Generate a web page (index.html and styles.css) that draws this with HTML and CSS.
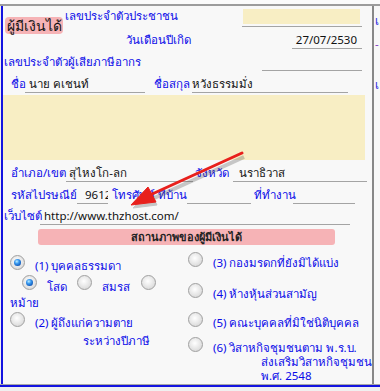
FILE: index.html
```html
<!DOCTYPE html>
<html lang="th">

<head>
    <meta charset="UTF-8">
    <title>ผู้มีเงินได้</title>
    <link rel="stylesheet" href="styles.css">
</head>

<body>
    <div class="screen">
        <div class="top-gap"></div>
        <div class="frame">
            <!-- Main form panel -->
            <div class="panel">
                <div class="head">
                    <div class="badge-col">
                        <div class="badge">ผู้มีเงินได้</div>
                    </div>
                    <div class="head-rows">
                        <div class="row r1">
                            <span class="lbl">เลขประจำตัวประชาชน</span>
                            <span class="field f-id"><span class="fill"></span></span>
                        </div>
                        <div class="row r2">
                            <span class="lbl l-birth">วันเดือนปีเกิด</span>
                            <span class="field f-date">27/07/2530</span>
                        </div>
                    </div>
                </div>

                <div class="row r3">
                    <span class="lbl l-tax">เลขประจำตัวผู้เสียภาษีอากร</span>
                    <span class="field f-tax"></span>
                </div>

                <div class="row r4">
                    <span class="lbl l-name">ชื่อ</span>
                    <span class="field f-name">นาย คเชนท์</span>
                    <span class="lbl l-surname">ชื่อสกุล</span>
                    <span class="field f-surname">หวังธรรมมั่ง</span>
                </div>

                <div class="address-box"></div>

                <div class="row r5">
                    <span class="lbl l-district">อำเภอ/เขต</span>
                    <span class="field f-district">สุไหงโก-ลก</span>
                    <span class="lbl l-province">จังหวัด</span>
                    <span class="field f-province">นราธิวาส</span>
                </div>

                <div class="row r6">
                    <span class="lbl l-zip">รหัสไปรษณีย์</span>
                    <span class="field f-zip">96121</span>
                    <span class="lbl l-phone">โทรศัพท์ ที่บ้าน</span>
                    <span class="field f-phone"></span>
                    <span class="lbl l-work">ที่ทำงาน</span>
                    <span class="field f-work"></span>
                </div>

                <div class="row r7">
                    <span class="lbl l-web">เว็บไซต์</span>
                    <span class="field f-web">http://www.thzhost.com/</span>
                </div>

                <div class="status-bar">สถานภาพของผู้มีเงินได้</div>

                <!-- Status options -->
                <div class="status">
                    <div class="col col-left">
                        <div class="opt opt1">
                            <span class="radio on"></span>
                            <span class="opt-text">(1) บุคคลธรรมดา</span>
                        </div>
                        <div class="marital">
                            <span class="radio on m-first"></span>
                            <span class="m-text m-single">โสด</span>
                            <span class="radio"></span>
                            <span class="m-text m-married">สมรส</span>
                            <span class="radio"></span>
                            <span class="m-text m-widow">หม้าย</span>
                        </div>
                        <div class="opt opt2">
                            <span class="radio"></span>
                            <span class="opt-text">(2) ผู้ถึงแก่ความตาย<br><span class="indent-2">ระหว่างปีภาษี</span></span>
                        </div>
                    </div>
                    <div class="col col-right">
                        <div class="opt opt3">
                            <span class="radio"></span>
                            <span class="opt-text">(3) กองมรดกที่ยังมิได้แบ่ง</span>
                        </div>
                        <div class="opt opt4">
                            <span class="radio"></span>
                            <span class="opt-text">(4) ห้างหุ้นส่วนสามัญ</span>
                        </div>
                        <div class="opt opt5">
                            <span class="radio"></span>
                            <span class="opt-text">(5) คณะบุคคลที่มิใช่นิติบุคคล</span>
                        </div>
                        <div class="opt opt6">
                            <span class="radio"></span>
                            <span class="opt-text t6">(6) วิสาหกิจชุมชนตาม พ.ร.บ.<br><span class="indent-6">ส่งเสริมวิสาหกิจชุมชน</span><br><span class="indent-6">พ.ศ. 2548</span></span>
                        </div>
                    </div>
                </div>
            </div>
            <div class="divider"></div>
            <!-- Neighbouring panel, mostly cut off -->
            <div class="side">
                <span class="side-a">เ</span>
                <span class="side-b">-</span>
                <span class="side-c">เ</span>
            </div>
        </div>
        <div class="blue-line"></div>

        <!-- Red annotation arrow -->
        <svg class="arrow" width="380" height="391" viewBox="0 0 380 391">
            <g opacity="0.3" fill="#555" stroke="#555">
                <line x1="244" y1="157" x2="152" y2="199" stroke-width="4" />
                <polygon points="133,208 150,191 157,205" stroke-width="1" />
            </g>
            <g fill="#e8201c" stroke="#e8201c">
                <line x1="242" y1="153" x2="150" y2="195" stroke-width="3" stroke-linecap="round" />
                <polygon points="131,205 148,187 156,202" stroke-width="1" stroke-linejoin="round" />
            </g>
        </svg>
    </div>
</body>

</html>
```

FILE: styles.css
```css
body {
    margin: 0;
    background: #f0f0f0;
    font-family: Tahoma, "Noto Sans", "DejaVu Sans", sans-serif;
    font-size: 11.5px;
}

.screen {
    position: relative;
    width: 380px;
    height: 391px;
    overflow: hidden;
}

.top-gap {
    height: 4px;
    background: #fbfbfb;
}

.frame {
    display: flex;
    height: 378px;
    border-top: 2px solid #9c9c9c;
    border-bottom: 1px solid #a8a8a8;
}

.panel {
    width: 369px;
    margin-left: 1px;
    border-left: 2px solid #1414e0;
    background: #f8f8f8;
}

.divider {
    width: 2px;
    background: #888;
}

.side {
    flex: 1;
    background: #f8f8f8;
    overflow: hidden;
    color: #2020e0;
}

.side span {
    display: block;
    padding-left: 1px;
    line-height: 14px;
}

.side-a {
    margin-top: 8px;
}

.side-b {
    margin-top: 9px;
    color: #8040c0;
}

.side-c {
    margin-top: 27px;
}

.blue-line {
    height: 2px;
    background: #1414e0;
}

/* Rows */
.head {
    display: flex;
}

.badge-col {
    width: 60px;
    padding-left: 2px;
}

.badge {
    margin-top: 11px;
    height: 17px;
    width: 58px;
    background: #f6b3b6;
    border-radius: 4px;
    font-size: 14px;
    line-height: 17px;
    text-align: center;
    color: #111;
}

.head-rows {
    flex: 1;
}

.row {
    display: flex;
    align-items: flex-end;
    height: 22px;
}

.lbl {
    flex: none;
    color: #0a0ae8;
    line-height: 14px;
    padding-bottom: 2px;
    white-space: nowrap;
}

.field {
    flex: none;
    border-bottom: 1px solid #a4a4a4;
    line-height: 14px;
    color: #111;
    white-space: nowrap;
    padding-bottom: 1px;
}

.r1 {
    height: 21px;
}

.r1 .lbl {
    width: 177px;
    padding-bottom: 4px;
}

.f-id {
    width: 120px;
    height: 18px;
    padding: 0;
    display: flex;
    align-items: flex-end;
}

.fill {
    display: block;
    width: 117px;
    height: 15px;
    margin: 0 1px 2px;
    background: #f8eec4;
}

.l-birth {
    width: 166px;
    padding-left: 61px;
}

.f-date {
    width: 70px;
    text-align: right;
    box-sizing: border-box;
    padding-right: 5px;
}

.r3 .lbl {
    padding-left: 1px;
    width: 258px;
}

.f-tax {
    width: 100px;
    height: 14px;
}

.l-name {
    width: 14px;
    padding-left: 8px;
}

.f-name {
    width: 116px;
    padding-left: 4px;
}

.l-surname {
    width: 38px;
    padding-left: 9px;
}

.f-surname {
    width: 156px;
}

.address-box {
    height: 65px;
    margin: 2px 7px 0 0;
    background: #f8eec4;
}

.l-district {
    min-width: 44px;
    padding-left: 8px;
}

.f-district {
    flex: 1;
    max-width: 124px;
    padding-left: 3px;
}

.l-province {
    width: 38px;
    padding-left: 2px;
}

.f-province {
    width: 128px;
    padding-left: 6px;
}

.l-zip {
    min-width: 61px;
    padding-left: 8px;
}

.f-zip {
    width: 23px;
    padding-left: 8px;
    overflow: hidden;
}

.l-phone {
    min-width: 73px;
    padding-left: 4px;
}

.f-phone {
    flex: 1;
    max-width: 64px;
    height: 14px;
}

.l-work {
    width: 39px;
    padding-left: 3px;
}

.f-work {
    width: 62px;
    height: 14px;
}

.r7 {
    height: 21px;
}

.l-web {
    width: 36px;
    padding-left: 1px;
}

.f-web {
    width: 306px;
    padding-left: 4px;
}

.status-bar {
    margin: 4px 0 0 35px;
    width: 297px;
    height: 16px;
    background: #f6b3b6;
    border-radius: 3px;
    font-weight: bold;
    text-align: center;
    line-height: 16px;
    color: #222;
    font-size: 11px;
}

/* Status options */
.status {
    display: flex;
}

.col-left {
    width: 187px;
}

.col-right {
    flex: 1;
}

.opt {
    display: flex;
    align-items: flex-start;
}

.opt-text {
    color: #0a0ae8;
    line-height: 14px;
    margin-left: 10px;
    padding-top: 4px;
    white-space: nowrap;
}

.radio {
    display: inline-block;
    flex: none;
    width: 13px;
    height: 13px;
    border: 1px solid #a0a0a0;
    border-radius: 50%;
    background: radial-gradient(circle at 45% 40%, #ffffff 0, #ececec 40%, #cfcfcf 100%);
    position: relative;
}

.radio.on::after {
    content: "";
    position: absolute;
    left: 3px;
    top: 3px;
    width: 7px;
    height: 7px;
    border-radius: 50%;
    background: radial-gradient(circle at 40% 35%, #bfefff 0, #3a9af0 35%, #0b4fb0 80%, #083a80 100%);
}

.col-left .opt {
    padding-left: 7px;
}

.opt1 {
    margin-top: 10px;
}

.marital {
    display: flex;
    flex-wrap: wrap;
    align-items: flex-start;
    margin-top: 2px;
    padding-left: 7px;
}

.m-first {
    margin-left: 12px;
}

.m-text {
    color: #0a0ae8;
    line-height: 14px;
    padding-top: 5px;
    margin-left: 10px;
}

.m-single {
    width: 30px;
}

.m-married {
    width: 39px;
}

.m-widow {
    flex-basis: 100%;
    margin-left: 0;
    padding-top: 2px;
}

.opt2 {
    margin-top: 2px;
}

.indent-2 {
    padding-left: 48px;
    line-height: 22px;
}

.col-right .opt {
    padding-left: 3px;
}

.opt3 {
    margin-top: 7px;
}

.opt4 {
    margin-top: 13px;
}

.opt5 {
    margin-top: 11px;
}

.opt6 {
    margin-top: 7px;
}

.t6 {
    line-height: 14px;
    padding-top: 4px;
}

.indent-6 {
    padding-left: 48px;
}

/* Annotation */
.arrow {
    position: absolute;
    left: 0;
    top: 0;
    pointer-events: none;
}
```
